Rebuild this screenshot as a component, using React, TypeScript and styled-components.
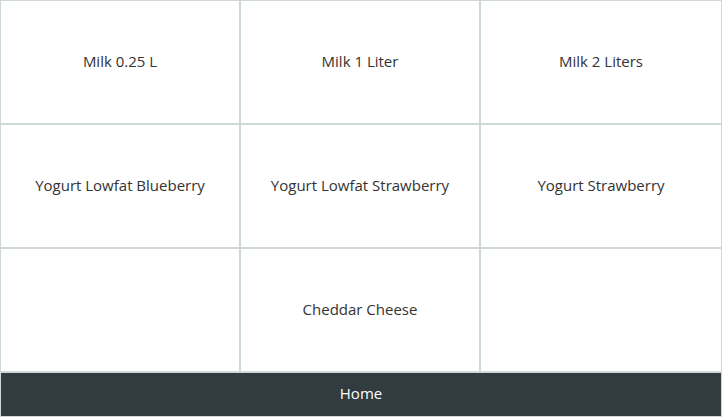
import React from 'react';
import styled, { createGlobalStyle } from 'styled-components';

const GlobalStyle = createGlobalStyle`
  html, body {
    margin: 0;
    padding: 0;
    background: #ffffff;
  }
  body {
    font-family: "Open Sans", "Noto Sans", sans-serif;
  }
`;

const Page = styled.div`
  width: 722px;
  height: 417px;
  display: flex;
  flex-direction: column;
  box-sizing: border-box;
`;

const Tiles = styled.div`
  display: grid;
  grid-template-columns: 240px 240px 242px;
  grid-auto-rows: 124px;
`;

const Tile = styled.div`
  display: flex;
  align-items: center;
  justify-content: center;
  padding-bottom: 3px;
  border: 1px solid #ced8d9;
  font-size: 15px;
  color: #333333;
  box-sizing: border-box;
`;

const Footer = styled.div`
  height: 45px;
  display: flex;
  align-items: center;
  justify-content: center;
  padding-bottom: 3px;
  background: #313b40;
  border: 1px solid #ced8d9;
  box-sizing: border-box;
  color: #ffffff;
  font-size: 15px;
`;

const products = [
  'Milk 0.25 L',
  'Milk 1 Liter',
  'Milk 2 Liters',
  'Yogurt Lowfat Blueberry',
  'Yogurt Lowfat Strawberry',
  'Yogurt Strawberry',
  '',
  'Cheddar Cheese',
  '',
];

const App: React.FC = () => {
  return (
    <Page>
      <GlobalStyle />
      <Tiles>
        {products.map((name, i) => (
          <Tile key={i}>{name}</Tile>
        ))}
      </Tiles>
      <Footer>Home</Footer>
    </Page>
  );
};

export default App;
